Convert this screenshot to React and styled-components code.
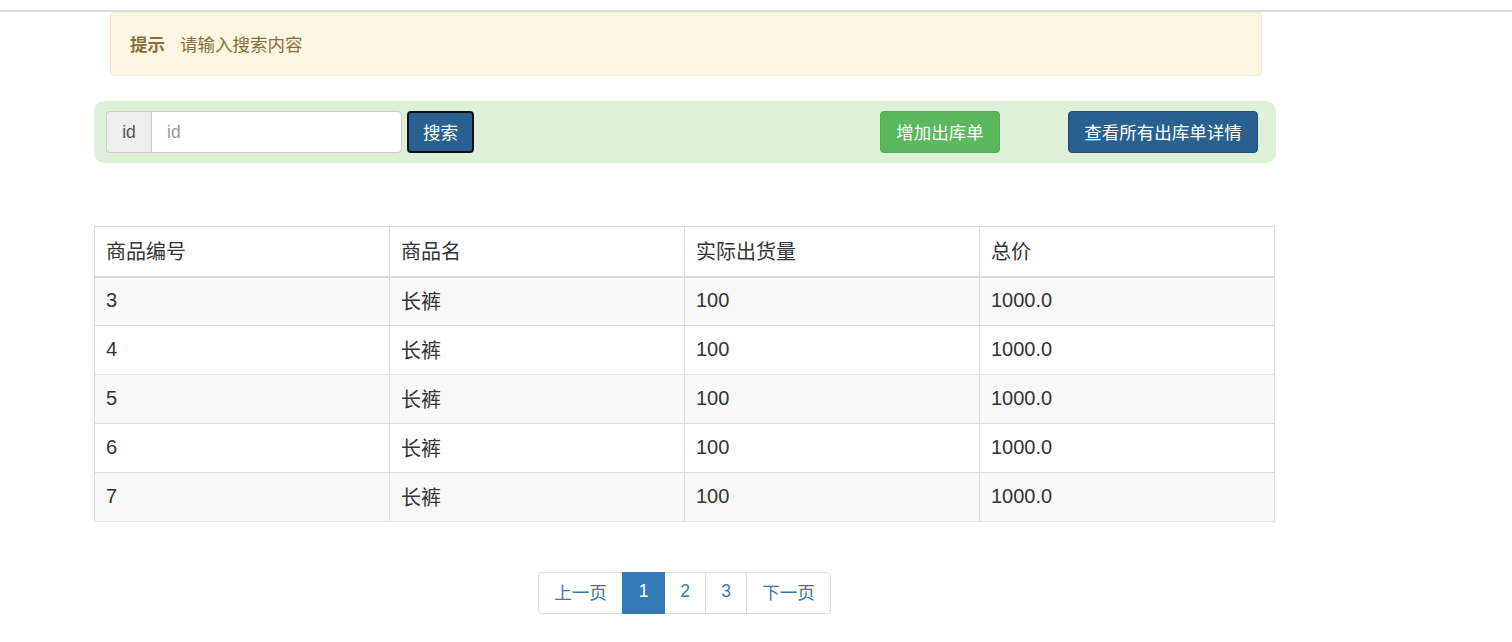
import React from "react";
import styled, { createGlobalStyle } from "styled-components";

const Global = createGlobalStyle`
  html, body { margin: 0; padding: 0; background: #fff; }
  body {
    font-family: "Liberation Sans", "Noto Sans CJK SC", sans-serif;
    color: #333;
  }
  * { box-sizing: border-box; }
`;

const TopLine = styled.div`
  margin-top: 10px;
  height: 2px;
  background: #dcdcdc;
`;

const Container = styled.div`
  margin-left: 94px;
  width: 1182px;
`;

const Alert = styled.div`
  margin: 0 14px 0 16px;
  height: 64px;
  display: flex;
  align-items: center;
  gap: 15px;
  padding: 0 19px 2px;
  background: #fcf6e2;
  border: 1px solid #faebcc;
  border-radius: 4px;
  color: #8a6d3b;
  font-size: 17.5px;
`;

const AlertTitle = styled.strong`
  font-weight: bold;
`;

const SearchBar = styled.div`
  margin-top: 25px;
  height: 62px;
  background: #dff0d8;
  border-radius: 10px;
  display: flex;
  align-items: center;
  padding: 0 18px 0 12px;
`;

const InputGroup = styled.div`
  display: flex;
  height: 42px;
  width: 296px;
`;

const Addon = styled.span`
  width: 45px;
  display: flex;
  align-items: center;
  justify-content: center;
  background: #eee;
  border: 1px solid #ccc;
  border-right: none;
  border-radius: 4px 0 0 4px;
  color: #555;
  font-size: 17.5px;
`;

const Input = styled.input`
  flex: 1;
  min-width: 0;
  border: 1px solid #ccc;
  border-radius: 0 4px 4px 0;
  padding: 0 15px;
  font-family: inherit;
  font-size: 17.5px;
  color: #555;
  background: #fff;
  outline: none;
  &::placeholder { color: #999; }
`;

const Button = styled.button`
  height: 42px;
  padding: 0 0 2px;
  display: inline-flex;
  align-items: center;
  justify-content: center;
  white-space: nowrap;
  font-family: inherit;
  font-size: 17.5px;
  color: #fff;
  border-radius: 4px;
  cursor: pointer;
  background: ${(p) => (p.$variant === "success" ? "#5cb85c" : "#286090")};
  border: ${(p) =>
    p.$focused
      ? "2px solid #111"
      : p.$variant === "success"
      ? "1px solid #4cae4c"
      : "1px solid #204d74"};
  margin-left: ${(p) => p.$ml || 0}px;
  width: ${(p) => p.$w}px;
`;

const Spacer = styled.div`
  flex: 1;
`;

const Table = styled.table`
  margin-top: 63px;
  width: 1181px;
  border-collapse: collapse;
  font-size: 20px;
  table-layout: fixed;
`;

const Th = styled.th`
  text-align: left;
  font-weight: normal;
  height: 50px;
  padding: 0 11px 2px;
  border: 1px solid #ddd;
  border-bottom: 2px solid #ddd;
  color: #333;
`;

const Tr = styled.tr`
  background: ${(p) => (p.$striped ? "#f9f9f9" : "#fff")};
`;

const Td = styled.td`
  height: 49px;
  padding: 0 11px 2px;
  border: 1px solid #ddd;
  color: #333;
`;

const PagerWrap = styled.div`
  width: 1181px;
  margin-top: 50px;
  display: flex;
  justify-content: center;
`;

const Pager = styled.ul`
  display: flex;
  list-style: none;
  margin: 0;
  padding: 0;
`;

const PageItem = styled.li`
  height: 42px;
  width: ${(p) => p.$w}px;
  padding: 0 0 3px;
  display: flex;
  align-items: center;
  justify-content: center;
  font-size: 17.5px;
  border: 1px solid ${(p) => (p.$active ? "#337ab7" : "#ddd")};
  margin-left: -1px;
  background: ${(p) => (p.$active ? "#337ab7" : "#fff")};
  color: ${(p) => (p.$active ? "#fff" : "#337ab7")};
  position: relative;
  z-index: ${(p) => (p.$active ? 1 : 0)};
  &:first-child {
    margin-left: 0;
    border-radius: 4px 0 0 4px;
  }
  &:last-child {
    border-radius: 0 4px 4px 0;
  }
`;

const rows = [3, 4, 5, 6, 7];

export default function App() {
  return (
    <>
      <Global />
      <TopLine />
      <Container>
        <Alert>
          <AlertTitle>提示</AlertTitle>
          <span>请输入搜索内容</span>
        </Alert>
        <SearchBar>
          <InputGroup>
            <Addon>id</Addon>
            <Input placeholder="id" />
          </InputGroup>
          <Button $focused $ml={5} $w={67}>搜索</Button>
          <Spacer />
          <Button $variant="success" $w={120}>增加出库单</Button>
          <Button $ml={68} $w={190}>查看所有出库单详情</Button>
        </SearchBar>
        <Table>
          <thead>
            <tr>
              <Th>商品编号</Th>
              <Th>商品名</Th>
              <Th>实际出货量</Th>
              <Th>总价</Th>
            </tr>
          </thead>
          <tbody>
            {rows.map((n, i) => (
              <Tr key={n} $striped={i % 2 === 0}>
                <Td>{n}</Td>
                <Td>长裤</Td>
                <Td>100</Td>
                <Td>1000.0</Td>
              </Tr>
            ))}
          </tbody>
        </Table>
        <PagerWrap>
          <Pager>
            <PageItem $w={85}>上一页</PageItem>
            <PageItem $w={43} $active>1</PageItem>
            <PageItem $w={42}>2</PageItem>
            <PageItem $w={42}>3</PageItem>
            <PageItem $w={85}>下一页</PageItem>
          </Pager>
        </PagerWrap>
      </Container>
    </>
  );
}
